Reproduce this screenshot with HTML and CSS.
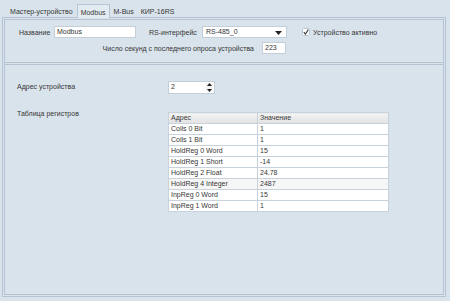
FILE: index.html
```html
<!DOCTYPE html>
<html lang="ru">
<head>
    <meta charset="UTF-8">
    <title>Modbus</title>
    <link rel="stylesheet" href="styles.css">
</head>
<body>

<!-- Tabs -->
<div class="tabs">
    <div class="tab">Мастер-устройство</div>
    <div class="tab active">Modbus</div>
    <div class="tab">M-Bus</div>
    <div class="tab">КИР-16RS</div>
</div>

<div class="pane">
    <div class="pane-inner">

        <!-- Top group -->
        <div class="group top-group">
            <div class="row">
                <span class="lbl lbl-name">Название</span>
                <div class="field name-field">Modbus</div>
                <span class="lbl lbl-rs">RS-интерфейс</span>
                <div class="field select-field">
                    RS-485_0
                    <svg class="drop" width="7" height="4" viewBox="0 0 7 4"><path d="M0 0h7L3.5 4z" fill="#222"/></svg>
                </div>
                <label class="check">
                    <svg width="8" height="8" viewBox="0 0 8 8">
                        <rect x="0.5" y="0.5" width="7" height="7" rx="1" fill="#fff" stroke="#b9c6d2"/>
                        <path d="M1.8 4.2l1.6 1.8 3-4.5" fill="none" stroke="#333" stroke-width="1.1"/>
                    </svg>
                    Устройство активно
                </label>
            </div>
            <div class="row row2">
                <span class="lbl lbl-sec">Число секунд с последнего опроса устройства</span>
                <div class="field sec-field">223</div>
            </div>
        </div>

        <!-- Bottom group -->
        <div class="group bottom-group">
            <div class="line addr-line">
                <span class="lbl lbl-col">Адрес устройства</span>
                <div class="field spin-field">
                    2
                    <div class="spin">
                        <svg width="5" height="3" viewBox="0 0 5 3"><path d="M0 3h5L2.5 0z" fill="#222"/></svg>
                        <svg width="5" height="3" viewBox="0 0 5 3"><path d="M0 0h5L2.5 3z" fill="#222"/></svg>
                    </div>
                </div>
            </div>
            <div class="line table-line">
                <span class="lbl lbl-col">Таблица регистров</span>
                <table class="regs">
                    <thead>
                        <tr><th>Адрес</th><th>Значение</th></tr>
                    </thead>
                    <tbody>
                        <tr><td>Coils 0 Bit</td><td>1</td></tr>
                        <tr><td>Coils 1 Bit</td><td>1</td></tr>
                        <tr><td>HoldReg 0 Word</td><td>15</td></tr>
                        <tr><td>HoldReg 1 Short</td><td>-14</td></tr>
                        <tr><td>HoldReg 2 Float</td><td>24.78</td></tr>
                        <tr class="hover"><td>HoldReg 4 Integer</td><td>2487</td></tr>
                        <tr><td>InpReg 0 Word</td><td>15</td></tr>
                        <tr><td>InpReg 1 Word</td><td>1</td></tr>
                    </tbody>
                </table>
            </div>
        </div>

    </div>
</div>

</body>
</html>
```

FILE: styles.css
```css
body {
    margin: 0;
    width: 450px;
    height: 301px;
    overflow: hidden;
    background-color: #d9e3ec;
    font-family: "Liberation Sans", Arial, sans-serif;
    font-size: 7px;
    color: #363636;
}

/* Tab strip */
.tabs {
    display: flex;
    align-items: flex-end;
    height: 17px;
    padding-left: 7px;
}

.tab {
    padding: 0 3px;
    height: 11px;
    line-height: 11px;
    margin-right: 1px;
}

.tab.active {
    background-color: #e3ebf2;
    border: 1px solid #b5c5d3;
    border-bottom: none;
    padding-top: 2px;
    position: relative;
    top: 1px;
    z-index: 1;
}

/* Tab pane, double line */
.pane {
    margin: 0 4px 0 2px;
    height: 280px;
    border: 1px solid #b3c3d1;
    padding: 1px;
    box-sizing: border-box;
}

.pane-inner {
    height: 100%;
    border: 1px solid #b3c3d1;
    box-sizing: border-box;
    display: flex;
    flex-direction: column;
}

.group {
    box-sizing: border-box;
}

.top-group {
    height: 43px;
    border-bottom: 1px solid #b3c3d1;
    padding-top: 6px;
}

.bottom-group {
    flex: 1;
    margin-top: 1px;
    border-top: 1px solid #b3c3d1;
    padding: 16px 0 0 12px;
}

.row {
    display: flex;
    align-items: center;
    height: 12px;
}

.row2 {
    margin-top: 4px;
}

.field {
    background-color: #fff;
    border: 1px solid #c3ced8;
    box-sizing: border-box;
    height: 12px;
    line-height: 10px;
    padding: 0 2px;
    position: relative;
}

.lbl-name {
    margin-left: 14px;
    width: 35px;
}

.name-field {
    width: 82px;
}

.lbl-rs {
    margin-left: 13px;
    width: 53px;
}

.select-field {
    width: 85px;
    padding-left: 3px;
}

.drop {
    position: absolute;
    right: 4px;
    top: 4px;
}

.check {
    display: flex;
    align-items: center;
    gap: 3px;
    margin-left: 15px;
}

.lbl-sec {
    width: 249px;
    text-align: right;
}

.sec-field {
    margin-left: 8px;
    width: 24px;
}

/* Bottom group lines */
.line {
    display: flex;
    align-items: flex-start;
}

.lbl-col {
    width: 151px;
}

.addr-line .lbl-col {
    line-height: 12px;
}

.spin-field {
    width: 47px;
    height: 13px;
}

.spin {
    position: absolute;
    right: 1px;
    top: 1px;
    width: 7px;
    height: 9px;
    display: flex;
    flex-direction: column;
    justify-content: space-between;
    align-items: center;
    background-color: #f3f3f3;
}

.table-line {
    margin-top: 18px;
}

.table-line .lbl-col {
    margin-top: -2px;
}

/* Register table */
.regs {
    border-collapse: collapse;
    width: 221px;
    background-color: #fff;
    border: 1px solid #bcc8d3;
}

.regs th,
.regs td {
    height: 10px;
    padding: 0 2px;
    text-align: left;
    font-weight: normal;
    border: 1px solid #c7d2dc;
    line-height: 10px;
}

.regs th {
    background: linear-gradient(#f4f4f4, #e3e3e3);
}

.regs th:first-child,
.regs td:first-child {
    width: 84px;
}

.regs tr.hover td {
    background-color: #f6f6f6;
}
```
